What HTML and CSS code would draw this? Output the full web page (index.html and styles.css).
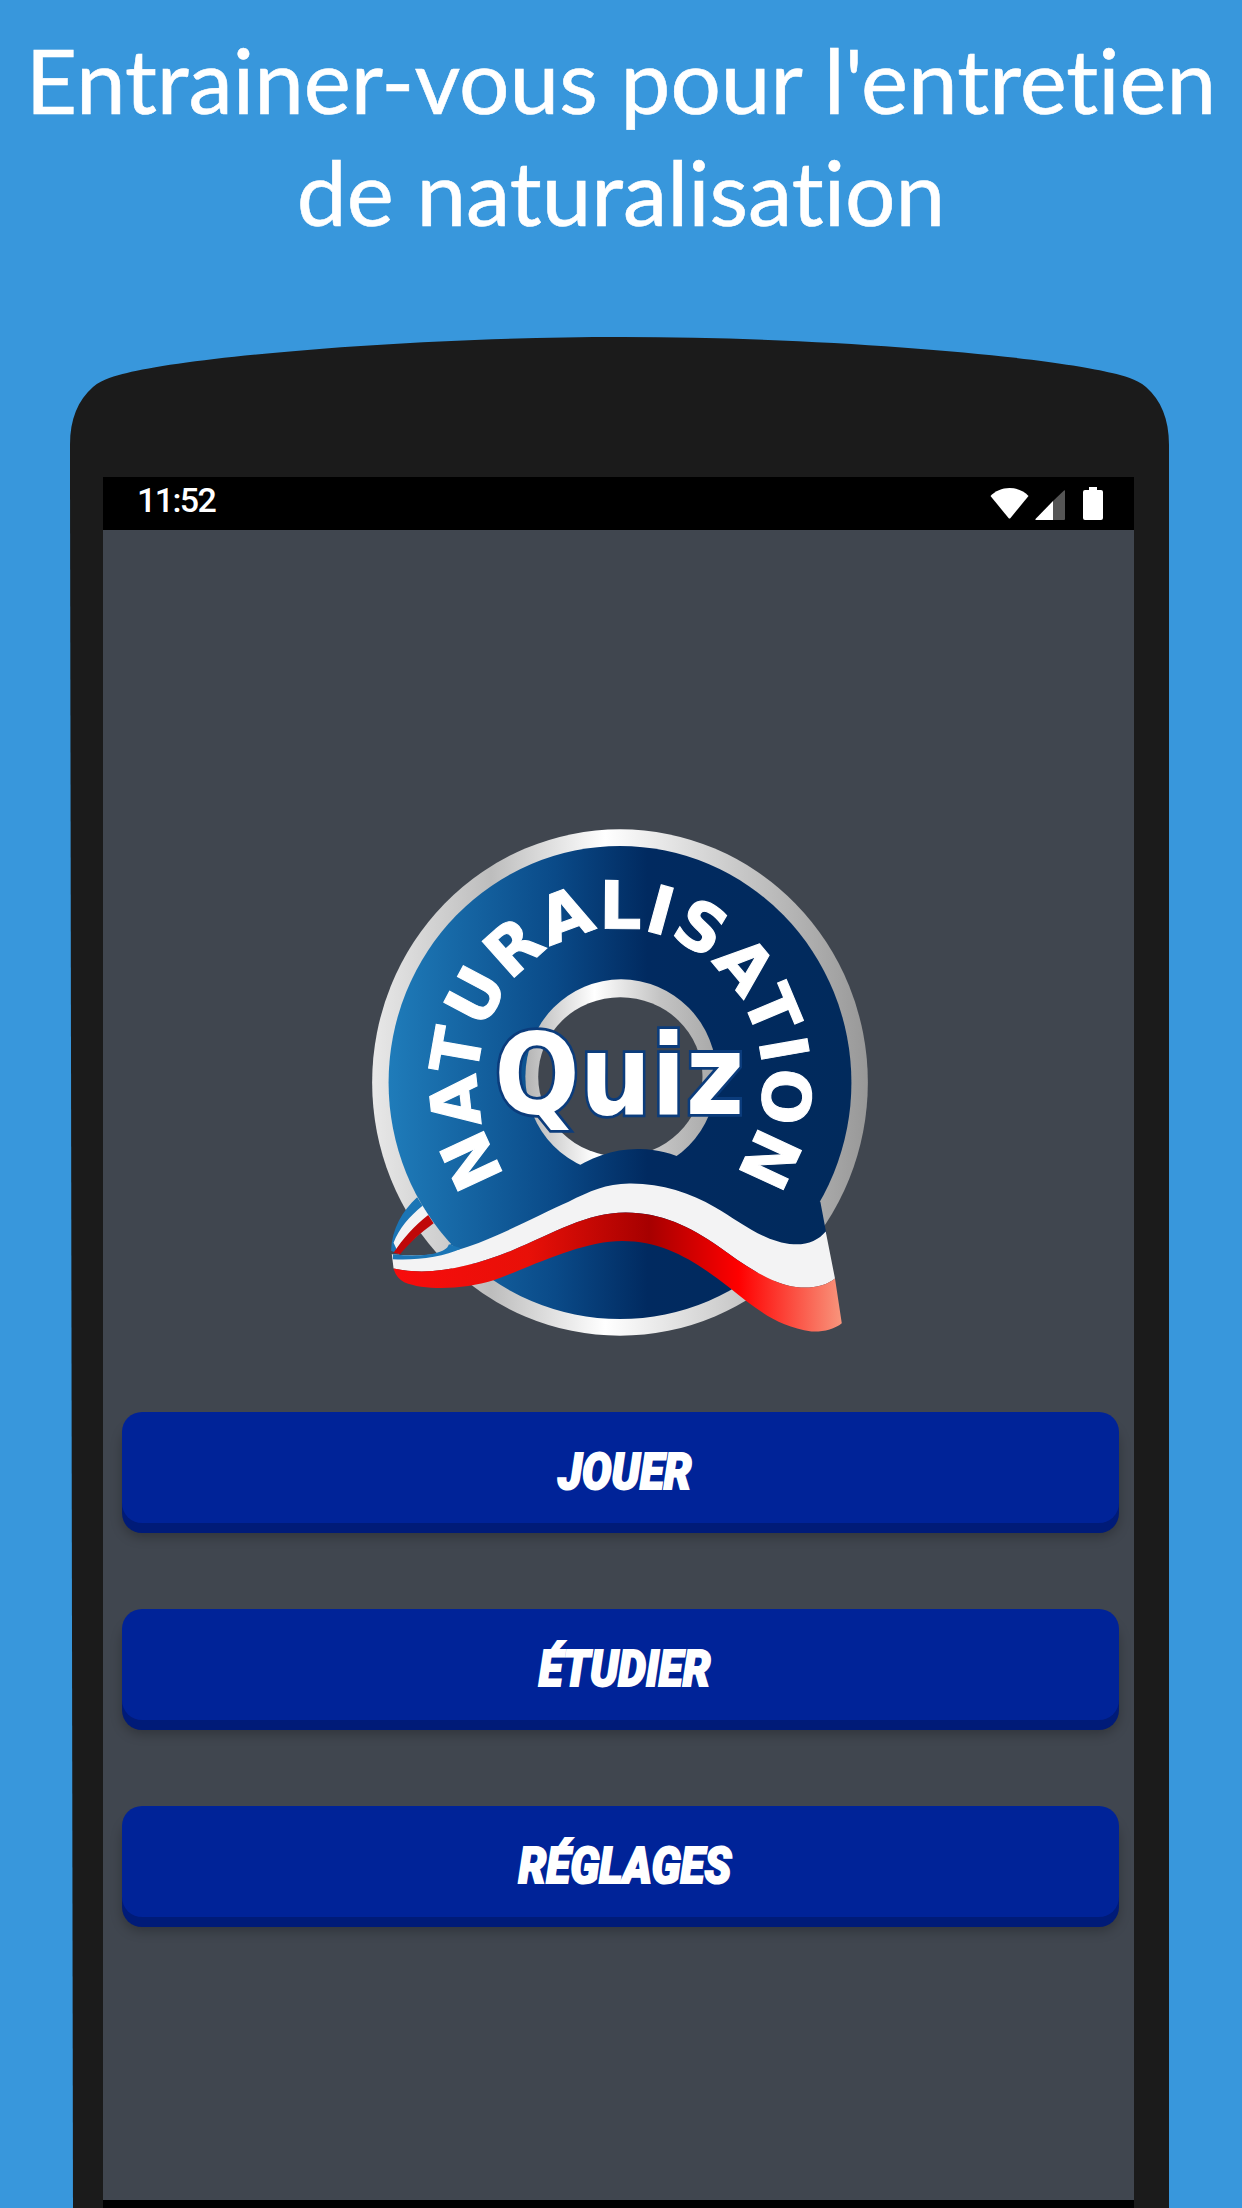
FILE: index.html
```html
<!DOCTYPE html>
<html lang="fr">
<head>
  <meta charset="UTF-8" />
  <title>Naturalisation Quiz</title>
  <link rel="stylesheet" href="styles.css">
</head>
<body>
  <h1 class="headline">Entrainer-vous pour l'entretien<br>de naturalisation</h1>

  <div class="phone">
    <svg class="phone-top" viewBox="0 0 1099 140" aria-hidden="true">
      <path d="M0 140 L0 108 C0 82 8 63 23 50 C33 41.5 45 39 57 36 C120 20 340 0 552 0 C764 0 979 20 1042 36 C1054 39 1066 41.5 1076 50 C1091 63 1099 82 1099 108 L1099 140 Z" fill="#1b1b1b"/>
    </svg>

    <div class="phone-body">
      <div class="statusbar">
        <span class="time">11:52</span>
        <div class="status-icons">
          <svg class="ico-wifi" viewBox="0 0 39 31"><path d="M0.5 8 C5 3 12 0 19.5 0 C27 0 34 3 38.5 8 L20.5 30 Q19.5 31 18.5 30 Z" fill="#fff"/></svg>
          <svg class="ico-signal" viewBox="0 0 30 30">
            <path d="M18 11 L18 30 L1 30 Q0 30 0.5 29 Z" fill="#fff"/>
            <path d="M18 11 L29 0.5 Q30 0 30 1 L30 29 Q30 30 29 30 L18 30 Z" fill="#555"/>
          </svg>
          <svg class="ico-battery" viewBox="0 0 20 33"><path d="M6 0 H14 V3 H18 Q20 3 20 5 V31 Q20 33 18 33 H2 Q0 33 0 31 V5 Q0 3 2 3 H6 Z" fill="#fff"/></svg>
        </div>
      </div>

      <div class="screen">
        <!-- logo drawn at 2.8x, coords are easier to read that way -->
        <svg class="logo" viewBox="0 0 1568 1568" role="img" aria-label="Naturalisation Quiz">
          <defs>
            <linearGradient id="silver" gradientUnits="userSpaceOnUse" x1="90" y1="0" x2="1478" y2="0">
              <stop offset="0" stop-color="#e8e8e8"/>
              <stop offset="0.24" stop-color="#bdbdbd"/>
              <stop offset="0.47" stop-color="#ffffff"/>
              <stop offset="0.75" stop-color="#c6c6c6"/>
              <stop offset="1" stop-color="#989898"/>
            </linearGradient>
            <linearGradient id="silverIn" gradientUnits="userSpaceOnUse" x1="520" y1="0" x2="1055" y2="0">
              <stop offset="0" stop-color="#b4b4b4"/>
              <stop offset="0.36" stop-color="#ffffff"/>
              <stop offset="0.7" stop-color="#c4c4c4"/>
              <stop offset="1" stop-color="#a8a8a8"/>
            </linearGradient>
            <linearGradient id="navy" gradientUnits="userSpaceOnUse" x1="135" y1="0" x2="1432" y2="0">
              <stop offset="0" stop-color="#1f7cba"/>
              <stop offset="0.36" stop-color="#0a4a88"/>
              <stop offset="0.56" stop-color="#012a60"/>
              <stop offset="1" stop-color="#012a5c"/>
            </linearGradient>
            <linearGradient id="red" gradientUnits="userSpaceOnUse" x1="150" y1="0" x2="1405" y2="0">
              <stop offset="0" stop-color="#f80c0c"/>
              <stop offset="0.3" stop-color="#e81008"/>
              <stop offset="0.57" stop-color="#a60000"/>
              <stop offset="0.77" stop-color="#ff0000"/>
              <stop offset="1" stop-color="#f8957c"/>
            </linearGradient>
            <path id="arc" d="M648 1194 A400 430 0 1 1 922 1194"/>
          </defs>

          <ellipse cx="784" cy="791" rx="694" ry="709" fill="url(#silver)"/>
          <ellipse cx="784" cy="791" rx="648" ry="662" fill="url(#navy)"/>
          <ellipse cx="787" cy="775" rx="268" ry="273" fill="url(#silverIn)"/>
          <ellipse cx="785" cy="775" rx="230" ry="223" fill="#40464f"/>

          <!-- left loop of the flag -->
          <path d="M143 1262 C145 1200 175 1150 216 1112 L262 1185 C225 1212 190 1240 165 1272 Z" fill="#1b75b5"/>
          <path d="M150 1240 C165 1200 195 1165 231 1136 L262 1185 C225 1212 190 1240 165 1272 Z" fill="#f3f3f4"/>
          <path d="M150 1268 C175 1230 210 1190 247 1162 L262 1185 C225 1212 195 1240 168 1272 Z" fill="#c00808"/>

          <!-- blue hump and tail over the rings -->
          <path d="M640 1042 C700 1000 770 975 840 977 C890 978 930 990 972 1008 L1345 1125 L1362 1215 L1300 1290 L1180 1290 L640 1180 L300 1250 Z" fill="url(#navy)"/>

          <path d="M145 1272 C240 1282 310 1268 360 1250 C450 1220 560 1160 640 1125 C700 1095 745 1075 810 1074 C900 1073 980 1100 1050 1140 C1120 1180 1190 1240 1270 1244 C1310 1246 1340 1232 1360 1208 L1386 1340 C1365 1358 1330 1367 1290 1365 C1210 1360 1130 1300 1060 1250 C980 1195 900 1155 800 1155 C690 1155 600 1212 480 1262 C370 1305 260 1335 150 1312 Z" fill="#f3f3f4"/>
          <path d="M148 1272 C240 1282 300 1268 305 1244 L340 1256 C290 1280 210 1290 148 1286 Z" fill="#1b75b5"/>
          <path d="M150 1312 C260 1335 370 1305 480 1262 C600 1212 690 1155 800 1155 C900 1155 980 1195 1060 1250 C1130 1300 1210 1360 1290 1365 C1330 1367 1365 1358 1386 1340 L1405 1465 C1385 1482 1350 1490 1320 1488 C1220 1475 1160 1420 1090 1365 C1000 1295 910 1235 790 1235 C680 1235 550 1300 430 1345 C350 1370 240 1375 180 1350 C165 1342 155 1330 150 1312 Z" fill="url(#red)"/>

          <text class="logo-arc"><textPath href="#arc" startOffset="50%" text-anchor="middle">NATURALISATION</textPath></text>
          <text class="logo-quiz" x="432" y="878" textLength="700" lengthAdjust="spacingAndGlyphs">Quiz</text>
        </svg>

        <div class="menu">
          <a class="menu-btn"><span class="menu-label">Jouer</span></a>
          <a class="menu-btn"><span class="menu-label">Étudier</span></a>
          <a class="menu-btn"><span class="menu-label">Réglages</span></a>
        </div>
      </div>

      <div class="navbar"></div>
    </div>
  </div>
</body>
</html>
```

FILE: styles.css
```css
html, body { margin: 0; padding: 0; }
body {
  width: 1242px;
  height: 2208px;
  overflow: hidden;
  background: #3897dc;
}

.headline {
  margin: 0;
  height: 337px;
  padding-top: 24px;
  box-sizing: border-box;
  font-family: Lato, sans-serif;
  font-size: 89px;
  line-height: 112px;
  font-weight: 400;
  font-variant-ligatures: none;
  color: #fff;
  text-align: center;
  -webkit-text-stroke: 0.6px #fff;
}

.phone { margin-left: 70px; width: 1099px; }
.phone-top { display: block; width: 1099px; height: 140px; }
.phone-body {
  padding: 0 35px 0 33px;
  background: #1b1b1b;
  clip-path: polygon(0 0, 100% 0, 100% 100%, 3px 100%);
}

.statusbar {
  display: flex;
  justify-content: space-between;
  align-items: center;
  height: 53px;
  padding: 0 31px 0 34px;
  background: #000;
}
.time {
  margin-bottom: 8px;
  font-family: Roboto, sans-serif;
  font-size: 34px;
  font-weight: 500;
  letter-spacing: -1.6px;
  color: #fff;
}
.status-icons { display: flex; align-items: center; }
.ico-wifi { width: 39px; height: 31px; display: block; }
.ico-signal { width: 30px; height: 30px; margin-left: 6px; margin-top: 2px; display: block; }
.ico-battery { width: 20px; height: 33px; margin-left: 18px; display: block; }

.screen {
  height: 1670px;
  padding-top: 270px;
  box-sizing: border-box;
  background: #40464f;
}
.logo { display: block; width: 560px; height: 560px; margin-left: 237px; }
.logo-arc {
  font-family: "DejaVu Sans", sans-serif;
  font-weight: 700;
  font-size: 185px;
  letter-spacing: 4px;
  fill: #fff;
  stroke: #fff;
  stroke-width: 3px;
}
.logo-quiz {
  font-family: "DejaVu Sans", sans-serif;
  font-weight: 700;
  font-size: 312px;
  fill: #fff;
  stroke: #0b3c7c;
  stroke-width: 16px;
  paint-order: stroke;
}

.menu {
  display: flex;
  flex-direction: column;
  gap: 86px;
  margin: 52px 15px 0 19px;
}
.menu-btn {
  display: flex;
  justify-content: center;
  align-items: center;
  height: 111px;
  padding: 8px 0 0 8px;
  box-sizing: border-box;
  border-radius: 20px;
  background: #002398;
  box-shadow: 0 10px 0 #001b78, 0 14px 12px rgba(0,0,0,0.25);
}
.menu-label {
  display: inline-block;
  transform: scaleX(0.88);
  font-family: Roboto, sans-serif;
  font-size: 50px;
  font-weight: 900;
  font-style: italic;
  text-transform: uppercase;
  color: #fff;
  -webkit-text-stroke: 2px #fff;
}

.navbar { height: 8px; background: #000; }
```
